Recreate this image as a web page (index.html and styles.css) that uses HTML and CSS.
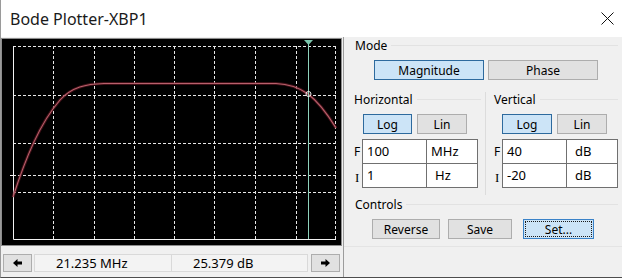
FILE: index.html
```html
<!DOCTYPE html>
<html lang="en">
  <head>
    <meta charset="UTF-8" />
    <title>Bode Plotter-XBP1</title>
    <link rel="stylesheet" href="styles.css">
  </head>
  <body>
    <div class="window">
      <div class="titlebar">
        <span class="title">Bode Plotter-XBP1</span>
        <svg class="close" width="13" height="13" viewBox="0 0 13 13">
          <path d="M0.5 0.5 L12.5 12.5 M12.5 0.5 L0.5 12.5" stroke="#111" stroke-width="1" fill="none" />
        </svg>
      </div>

      <div class="main">
        <div class="scope">
          <div class="plot">
            <svg width="339" height="206" viewBox="0 0 339 206">
              <g stroke="#e8e8e8" stroke-width="1" stroke-dasharray="3 2" fill="none">
                <!-- vertical grid -->
                <path d="M51.5 7 V200 M92.5 7 V200 M132.5 7 V200 M172.5 7 V200 M212.5 7 V200 M253.5 7 V200 M294.5 7 V200 M333.5 7 V200" />
                <!-- horizontal grid -->
                <path d="M11 7.5 H334 M11 56.5 H334 M11 104.5 H334 M11 136.5 H334 M11 153.5 H334" />
              </g>
              <g stroke="#f2f2f2" stroke-width="1" fill="none">
                <path d="M11.5 7 V200.5 H334" />
                <path d="M8 136.5 H11" />
              </g>
              <path d="M11 158 C 24 118 38 84 58 61 C 70 48 84 45 102 44.5 L 274 44.5 C 289 45 299 50 306 55 C 318 64 326 76 334 89"
                    stroke="#6a1a26" stroke-width="3" fill="none" opacity="0.6" />
              <path d="M11 158 C 24 118 38 84 58 61 C 70 48 84 45 102 44.5 L 274 44.5 C 289 45 299 50 306 55 C 318 64 326 76 334 89"
                    stroke="#b8606c" stroke-width="1.1" fill="none" />
              <!-- cursor -->
              <path d="M306.5 2 V200" stroke="#8fd3bd" stroke-width="1" />
              <path d="M302 1 H311 L306.5 6 Z" fill="#7cc7ae" />
              <circle cx="306.5" cy="55" r="2.5" stroke="#f0f0f0" stroke-width="1" fill="none" />
            </svg>
          </div>
          <div class="readout">
            <button class="btn arrow">
              <svg width="9" height="8" viewBox="0 0 9 8"><path d="M0 4 L4.5 0 V2.5 H9 V5.5 H4.5 V8 Z" fill="#000" /></svg>
            </button>
            <div class="value first">21.235 MHz</div>
            <div class="value second">25.379 dB</div>
            <button class="btn arrow right">
              <svg width="9" height="8" viewBox="0 0 9 8"><path d="M9 4 L4.5 0 V2.5 H0 V5.5 H4.5 V8 Z" fill="#000" /></svg>
            </button>
          </div>
        </div>

        <div class="panel">
          <div class="legend mode"><span>Mode</span><i class="rule"></i></div>
          <div class="mode-row">
            <button class="btn on wide">Magnitude</button>
            <button class="btn wide">Phase</button>
          </div>

          <div class="axes">
            <div class="axis horiz">
              <div class="legend"><span>Horizontal</span><i class="rule"></i></div>
              <div class="toggle">
                <button class="btn on">Log</button>
                <button class="btn">Lin</button>
              </div>
              <div class="fields">
                <div class="frow">
                  <span class="flabel">F</span>
                  <div class="cell num">100</div>
                  <div class="cell unit">MHz</div>
                </div>
                <div class="frow">
                  <span class="flabel low">I</span>
                  <div class="cell num">1</div>
                  <div class="cell unit pad">Hz</div>
                </div>
              </div>
            </div>
            <div class="axis vert">
              <div class="legend"><span>Vertical</span><i class="rule"></i></div>
              <div class="toggle">
                <button class="btn on">Log</button>
                <button class="btn">Lin</button>
              </div>
              <div class="fields">
                <div class="frow">
                  <span class="flabel">F</span>
                  <div class="cell num">40</div>
                  <div class="cell unit pad">dB</div>
                </div>
                <div class="frow">
                  <span class="flabel low">I</span>
                  <div class="cell num">-20</div>
                  <div class="cell unit pad">dB</div>
                </div>
              </div>
            </div>
          </div>

          <div class="legend controls"><span>Controls</span><i class="rule"></i></div>
          <div class="ctrl-row">
            <button class="btn reverse">Reverse</button>
            <button class="btn save">Save</button>
            <button class="btn on focus set">Set...</button>
          </div>
          <div class="panel-foot"></div>
        </div>
      </div>
    </div>
  </body>
</html>
```

FILE: styles.css
```css
body {
  margin: 0;
  font-family: "Noto Sans", "Open Sans", sans-serif;
  font-size: 12px;
  color: #000;
}
.window {
  width: 622px;
  height: 278px;
  box-sizing: border-box;
  background: #f0f0f0;
  border-left: 1px solid #9a9a9a;
  border-bottom: 1px solid #4d4d4d;
  overflow: hidden;
}
.titlebar {
  height: 37px;
  background: #ffffff;
  display: flex;
  align-items: center;
  justify-content: space-between;
  padding: 0 8px 0 9px;
}
.title {
  font-size: 16px;
  color: #1a1a1a;
}
.main {
  display: flex;
  height: 240px;
}
.scope {
  width: 342px;
}
.plot {
  margin-top: 1px;
  width: 339px;
  height: 206px;
  border: 1px solid #8c8c8c;
  background: #000;
}
.plot svg {
  display: block;
}
.readout {
  display: flex;
  margin-top: 8px;
  height: 18px;
  padding-left: 2px;
}
.btn {
  font: inherit;
  color: #000;
  background: #e1e1e1;
  border: 1px solid #adadad;
  height: 20px;
  padding: 0;
  box-sizing: border-box;
}
.btn.on {
  background: #cce4f7;
  border-color: #2d6a9e;
}
.btn.arrow {
  width: 29px;
  height: 18px;
  display: flex;
  align-items: center;
  justify-content: center;
}
.btn.arrow.right {
  margin-left: 3px;
}
.value {
  box-sizing: border-box;
  height: 18px;
  line-height: 16px;
  background: #f3f3f3;
  border: 1px solid #d9d9d9;
  padding-left: 21px;
  font-size: 13px;
}
.value.first {
  width: 138px;
  margin-left: 2px;
}
.value.second {
  width: 136px;
  border-left: none;
}
.panel {
  flex: 1;
  border-left: 1px solid #9c9c9c;
}
.legend {
  display: flex;
  align-items: center;
  height: 15px;
  line-height: 15px;
}
.legend span {
  margin-left: 11px;
}
.rule {
  flex: 1;
  border-top: 1px solid #e2e2e2;
  margin: 0 4px 0 4px;
}
.legend.mode {
  margin-top: 1px;
}
.mode-row {
  display: flex;
  gap: 4px;
  margin-top: 7px;
  padding-left: 30px;
}
.btn.wide {
  width: 110px;
}
.axes {
  display: flex;
  margin-top: 12px;
}
.axis {
  padding-bottom: 7px;
}
.axis.horiz {
  width: 141px;
  border-right: 1px solid #dcdcdc;
}
.axis.vert {
  flex: 1;
}
.axis.horiz .legend span {
  margin-left: 10px;
}
.axis.vert .legend span {
  margin-left: 8px;
}
.toggle {
  display: flex;
  gap: 5px;
  margin-top: 7px;
}
.toggle .btn {
  width: 50px;
}
.horiz .toggle {
  padding-left: 19px;
}
.horiz .toggle .btn.on {
  width: 49px;
}
.vert .toggle {
  padding-left: 16px;
}
.fields {
  margin-top: 5px;
}
.frow {
  display: flex;
  height: 25px;
}
.frow + .frow {
  margin-top: -1px;
}
.flabel {
  width: 8px;
  line-height: 25px;
  font-size: 12px;
}
.flabel.low {
  font-family: "Liberation Serif", serif;
  font-size: 13px;
  line-height: 30px;
  padding-left: 1px;
  box-sizing: border-box;
}
.horiz .frow {
  padding-left: 10px;
}
.vert .frow {
  padding-left: 8px;
}
.cell {
  box-sizing: border-box;
  background: #ffffff;
  border: 1px solid #707070;
  height: 25px;
  line-height: 22px;
  padding-left: 4px;
  font-size: 13px;
}
.cell.num {
  width: 65px;
}
.cell.unit {
  width: 52px;
  margin-left: -1px;
}
.cell.unit.pad {
  padding-left: 8px;
}
.legend.controls {
  margin-top: 2px;
}
.ctrl-row {
  display: flex;
  margin-top: 7px;
  padding-left: 28px;
}
.btn.reverse {
  width: 68px;
}
.btn.save {
  width: 64px;
  margin-left: 8px;
}
.btn.set {
  width: 71px;
  margin-left: 11px;
  border-color: #3a82c8;
}
.btn.focus {
  outline: 1px dotted #1a1a1a;
  outline-offset: -3px;
}
.panel-foot {
  margin-top: 7px;
  border-top: 1px solid #e4e4e4;
}
```
